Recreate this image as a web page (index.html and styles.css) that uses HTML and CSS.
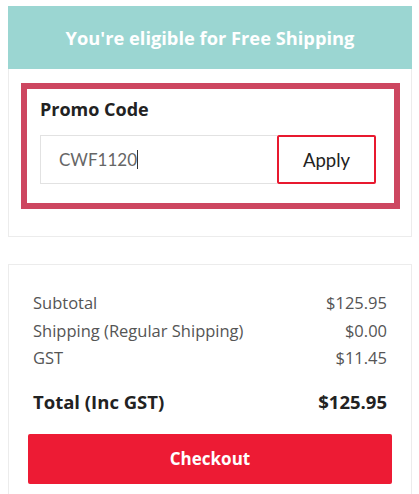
FILE: index.html
```html
<!DOCTYPE html>
<html>
<head>
<meta charset="UTF-8" />
<link rel="stylesheet" href="styles.css">
</head>
<body>

<div class="card">
  <div class="ship-banner">You're eligible for Free Shipping</div>
  <div class="card-body">
    <div class="promo">
      <div class="promo-title">Promo Code</div>
      <div class="promo-row">
        <div class="promo-input">CWF1120<span class="caret"></span></div>
        <button class="apply">Apply</button>
      </div>
    </div>
  </div>
</div>

<div class="card summary">
  <div class="line"><span>Subtotal</span><span>$125.95</span></div>
  <div class="line"><span>Shipping (Regular Shipping)</span><span>$0.00</span></div>
  <div class="line"><span>GST</span><span>$11.45</span></div>
  <div class="line total"><span>Total (Inc GST)</span><span>$125.95</span></div>
  <button class="checkout">Checkout</button>
</div>

</body>
</html>
```

FILE: styles.css
```css
body {
    margin: 0;
    padding: 6px 7px 0 8px;
    font-family: "Open Sans", Lato, sans-serif;
    background: #ffffff;
}

.card {
    border: 1px solid #ececec;
    background: #fff;
}

.ship-banner {
    background: #9bd6d2;
    color: #fff;
    font-weight: bold;
    font-size: 18.3px;
    height: 63px;
    line-height: 63px;
    text-align: center;
    margin: -1px -1px 0 -1px;
}

.card-body {
    padding: 14px 11px 27px 12px;
}

.promo {
    border: 6px solid #cd4660;
    padding: 8px 18px 19px 13px;
}

.promo-title {
    font-size: 18px;
    font-weight: bold;
    color: #222;
    margin-bottom: 14px;
}

.promo-row {
    display: flex;
}

.promo-input {
    flex: 1;
    height: 47px;
    line-height: 47px;
    border: 1px solid #e2e2e2;
    border-right: 0;
    padding-left: 18px;
    font-family: Lato, sans-serif;
    font-size: 17px;
    color: #666;
}

.caret {
    display: inline-block;
    width: 1px;
    height: 19px;
    background: #333;
    vertical-align: -3px;
}

.apply {
    width: 99px;
    height: 49px;
    border: 2px solid #e8192f;
    border-radius: 2px;
    background: #fff;
    font-family: Lato, sans-serif;
    font-size: 18.5px;
    color: #222;
    cursor: pointer;
}

.summary {
    margin-top: 27px;
    padding: 24px 19px 10px 19px;
}

.line {
    display: flex;
    justify-content: space-between;
    padding: 0 5px;
    font-size: 16.5px;
    line-height: 27.5px;
    color: #555;
}

.total {
    font-size: 18.5px;
    font-weight: bold;
    color: #222;
    margin-top: 15px;
    line-height: 30px;
}

.checkout {
    display: block;
    width: 100%;
    height: 50px;
    margin-top: 17px;
    border: 0;
    border-radius: 2px;
    background: #ed1b34;
    color: #fff;
    font-family: "Open Sans", sans-serif;
    font-size: 17px;
    font-weight: bold;
}
```
